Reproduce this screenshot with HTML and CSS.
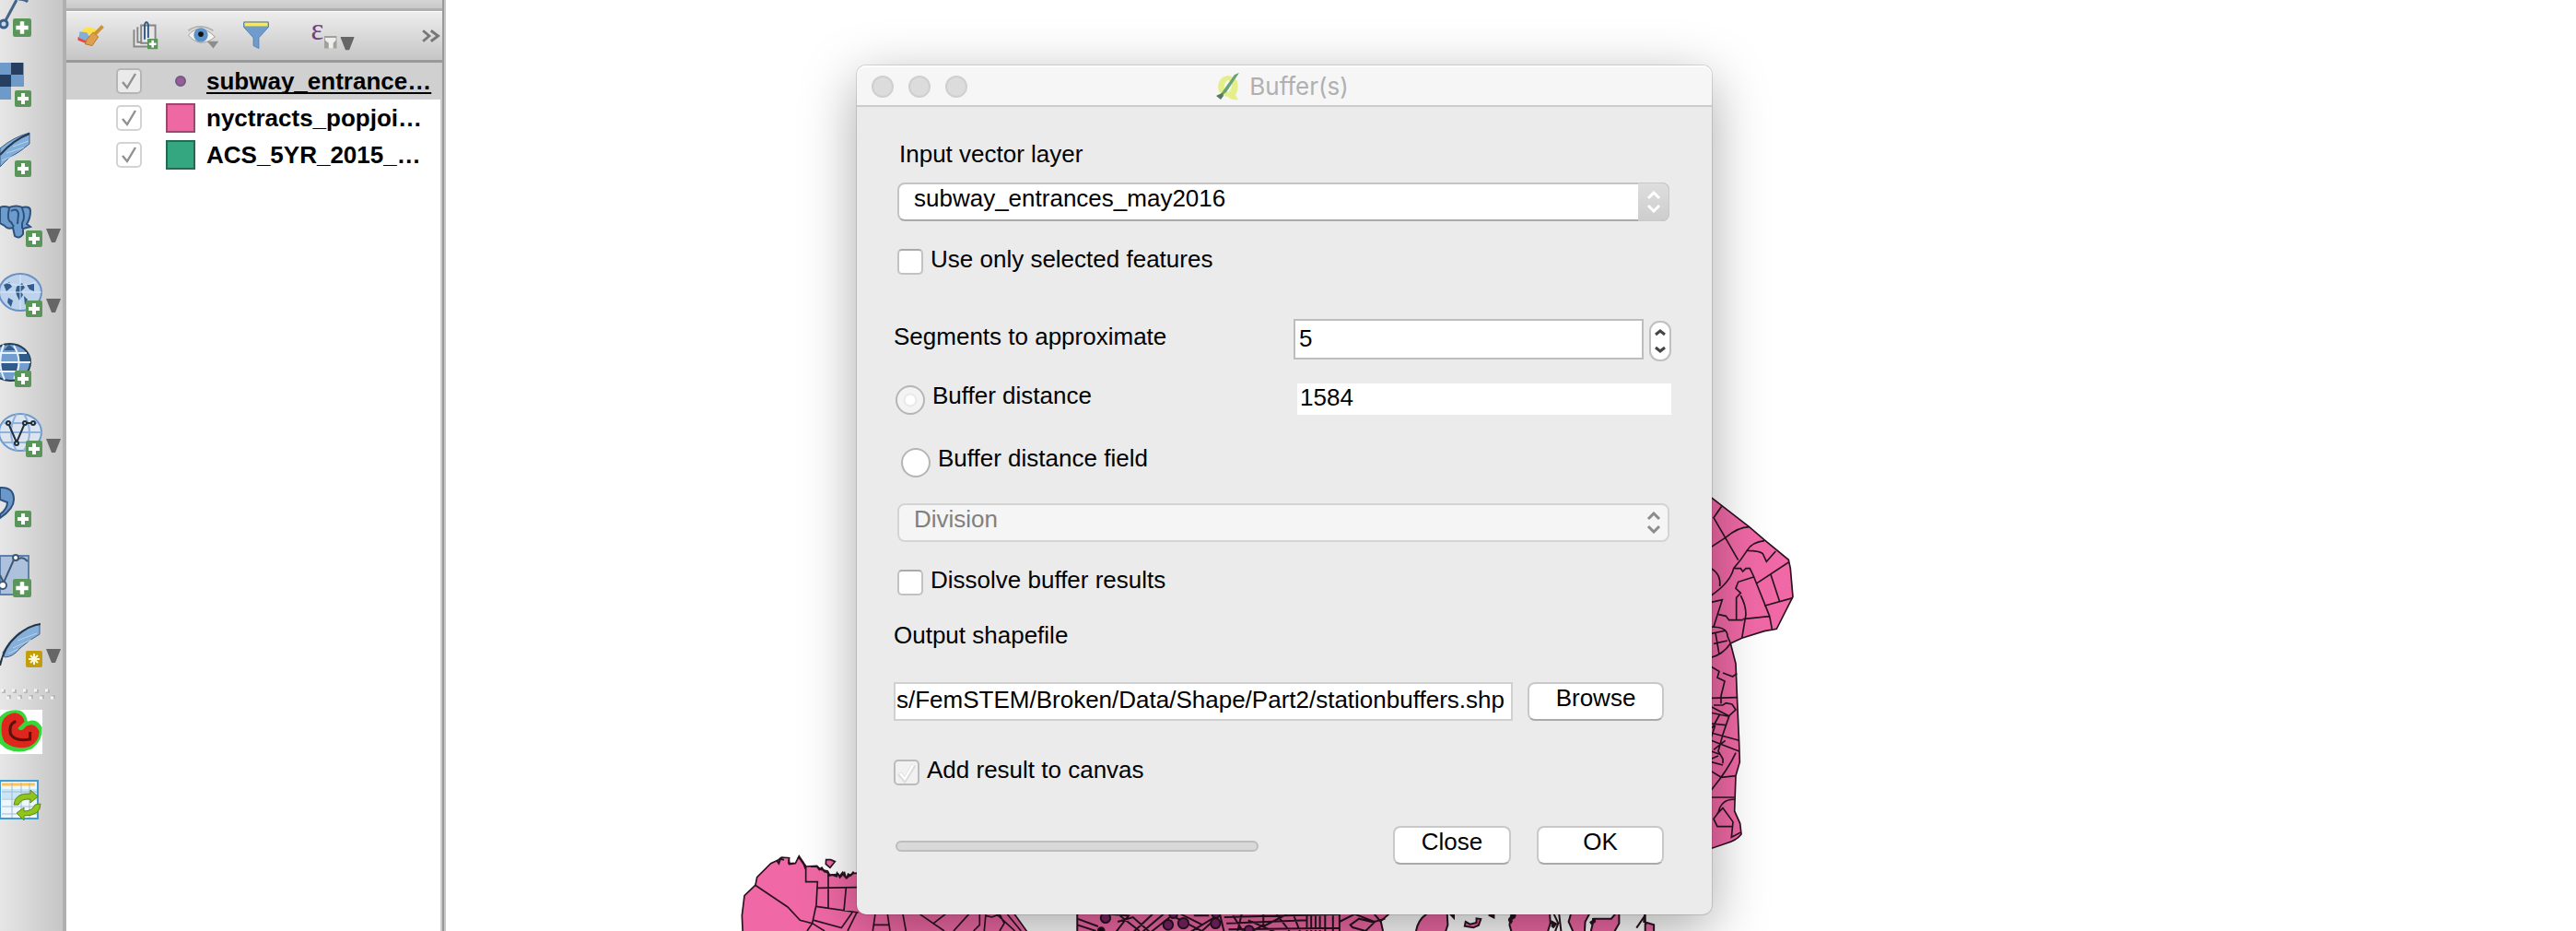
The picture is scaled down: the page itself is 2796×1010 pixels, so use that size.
FILE: index.html
```html
<!DOCTYPE html>
<html lang="en">
<head>
<meta charset="utf-8">
<title>Buffer(s)</title>
<link rel="stylesheet" href="styles.css">
</head>
<body>
<svg class="defs" aria-hidden="true">
  <symbol id="plus" viewBox="0 0 18 18"><rect width="18" height="18" rx="2" fill="#5a9659"/><path d="M9 3v12M3 9h12" stroke="#fff" stroke-width="4"/></symbol>
  <symbol id="down" viewBox="0 0 16 15"><path d="M0 0h16L10 15H6z" fill="#666"/></symbol>
  <symbol id="updown" viewBox="0 0 16 24"><path d="M2 8l6-6 6 6M2 16l6 6 6-6" fill="none" stroke="currentColor" stroke-width="3"/></symbol>
</svg>
<div class="app">
  <nav class="tools" aria-label="Manage layers">
    <button class="tool first" aria-label="Add vector layer"><svg viewBox="0 0 68 52"><path d="M4 26L18 0M20 -1Q27 -1 30 2" fill="none" stroke="#456488" stroke-width="3"/><circle cx="4" cy="26" r="4" fill="#cdd8e6" stroke="#3b5f8a" stroke-width="3"/><use href="#plus" x="14" y="20" width="20" height="20"/></svg></button>
    <button class="tool" aria-label="Add raster layer"><svg viewBox="0 52 68 76"><path d="M0 68h26v26H12v14H0z" fill="#6e9aca"/><path d="M12 68h13v13H12zM0 81h12v13H0z" fill="#263f60"/><use href="#plus" x="16" y="98" width="18" height="18"/></svg></button>
    <button class="tool" aria-label="Add delimited layer"><svg viewBox="0 128 68 76"><path d="M0 161Q14 149 32 144V156Q22 165 10 171L0 181z" fill="#82aedb" stroke="#405f82" stroke-width="1"/><path d="M0 168Q14 152 32 145" fill="none" stroke="#263b53" stroke-width="2"/><path d="M7 166L26 160M2 174L18 168M14 159L31 153" stroke="#b8d2ed"/><use href="#plus" x="16" y="174" width="18" height="18"/></svg></button>
    <button class="tool" aria-label="Add PostGIS layer"><svg viewBox="0 204 68 76"><path d="M0 225Q4 223 10 225Q18 222 24 225Q33 223 33 229Q33 237 29 243L33 246L25 248V254Q21 260 16 256L14 247Q8 249 5 245L0 242z" fill="#6c9bcd" stroke="#2d527b" stroke-width="2"/><path d="M10 226Q7 239 12 241L15 246M24 226Q28 236 24 242V248M12 229Q19 225 20 232L19 243" fill="none" stroke="#2d527b" stroke-width="2"/><use href="#plus" x="28" y="250" width="18" height="18"/><use href="#down" x="50" y="248" width="16" height="15"/></svg></button>
    <button class="tool" aria-label="Add SpatiaLite layer"><svg viewBox="0 280 68 76"><ellipse cx="22" cy="317" rx="23" ry="20" fill="#bdd2ec" stroke="#6791c4" stroke-width="2"/><path d="M4 309l6-3 3 5-6 5zM18 311l6-4 3 5-4 4 2 4-4 6-3-6-1-4zM29 309l8-1v8l-5-2zM9 323l5 3-2 7-4-5zM26 321l4 4-3 6z" fill="#315e8d"/><path d="M0 317h45M22 298v38M5 306q17 7 34 0" fill="none" stroke="#dce8f5" stroke-width="1"/><use href="#plus" x="28" y="326" width="18" height="18"/><use href="#down" x="50" y="324" width="16" height="15"/></svg></button>
    <button class="tool" aria-label="Add WMS layer"><svg viewBox="0 356 68 76"><ellipse cx="11" cy="393" rx="22" ry="20" fill="#739fd0" stroke="#253e57" stroke-width="2"/><path d="M4 380L10 374L17 380zM20 384h11l2 8H20zM0 394h20v9H0z" fill="#315b88"/><path d="M0 383h29M0 393h33M0 403h26M4 374Q-4 393 5 412M15 375Q26 393 15 411" fill="none" stroke="#e8f0f9" stroke-width="2"/><use href="#plus" x="16" y="402" width="18" height="18"/></svg></button>
    <button class="tool" aria-label="Add WFS layer"><svg viewBox="0 432 68 76"><ellipse cx="22" cy="469" rx="23" ry="20" fill="#dce5ef" stroke="#6d9bd0" stroke-width="2"/><path d="M0 469h45M4 459h36M4 480h28M18 449Q6 469 18 489M26 449Q38 469 26 489" fill="none" stroke="#8eb2dc" stroke-width="2"/><path d="M9 459L18 480L27 459H36" fill="none" stroke="#202f3c" stroke-width="2"/><g fill="#dce5ef" stroke="#202f3c" stroke-width="2"><circle cx="9" cy="459" r="2"/><circle cx="18" cy="481" r="2"/><circle cx="27" cy="459" r="2"/><circle cx="36" cy="459" r="2"/></g><use href="#plus" x="28" y="478" width="18" height="18"/><use href="#down" x="50" y="476" width="16" height="15"/></svg></button>
    <button class="tool" aria-label="Add delimited text layer"><svg viewBox="0 508 68 76"><path d="M0 529Q15 528 15 542Q15 552 0 562V558Q8 552 8 545L0 542z" fill="#6b98cb" stroke="#2d527b" stroke-width="2"/><use href="#plus" x="16" y="554" width="18" height="18"/></svg></button>
    <button class="tool" aria-label="Add virtual layer"><svg viewBox="0 584 68 76"><path d="M0 603h31v42H0z" fill="#adc1dc" stroke="#5f80aa" stroke-width="2"/><path d="M0 624L4 632L16 605M18 608Q24 602 30 609" fill="none" stroke="#3d5875" stroke-width="2"/><g fill="#fff" stroke="#3d5875" stroke-width="2"><circle cx="3" cy="635" r="4"/><circle cx="17" cy="605" r="3"/></g><use href="#plus" x="14" y="628" width="20" height="20"/></svg></button>
    <button class="tool" aria-label="New layer"><svg viewBox="0 660 68 76"><path d="M3 708Q16 682 43 677V688Q32 694 22 703Q14 713 5 713z" fill="#86afd9" stroke="#405f82" stroke-width="1"/><path d="M0 722Q4 702 18 690T44 677" fill="none" stroke="#23364c" stroke-width="2"/><path d="M14 703L34 694M19 695L40 687M9 709L20 704" stroke="#b8d2ed"/><rect x="28" y="706" width="18" height="18" rx="2" fill="#c29e0c"/><path d="M37 709v12M31 715h12M33 711l8 8M41 711l-8 8" stroke="#fff8d8" stroke-width="2"/><use href="#down" x="50" y="704" width="16" height="15"/></svg></button>
    <svg class="grip" viewBox="0 736 68 24" aria-hidden="true"><g stroke="#b9b9b9" stroke-width="4" stroke-dasharray="4 8"><path d="M2 750H60M8 756H62"/></g><g stroke="#f5f5f5" stroke-width="3" stroke-dasharray="3 9"><path d="M1 749H58M7 757H61"/></g></svg>
    <button class="tool low" aria-label="Buffer"><svg viewBox="0 760 68 72"><path d="M0 770h46v48H0z" fill="#fff"/><g transform="translate(0 560) scale(.3333)"><path d="M0 652Q25 625 65 632Q85 640 90 668Q120 655 137 688Q140 730 105 757Q60 776 20 757L0 740z" fill="#37d63b"/><path d="M5 680Q10 645 50 640Q75 645 80 668L58 690Q68 706 85 684Q112 668 128 700Q128 735 95 750Q50 762 15 735Q2 715 5 680z" fill="#dd271d"/><path d="M52 668Q28 675 34 708Q48 735 98 726V702" fill="none" stroke="#5d100c" stroke-width="9"/></g></svg></button>
    <button class="tool" aria-label="Refresh table"><svg viewBox="0 832 68 76"><path d="M0 847h41v41H0z" fill="#eef7fd" stroke="#439bcd" stroke-width="2"/><path d="M2 856h38v10H2z" fill="#c9e5f6"/><path d="M2 851h36" stroke="#ffc24d" stroke-width="3"/><path d="M2 859h38M2 867h38M2 875h38M2 883h38M13 849v38M23 849v38M32 849v38" stroke="#9dbbd3"/><path d="M15 873Q16 860 33 861V857L41 864L33 871V867Q23 866 20 873zM44 872Q44 885 26 885V890L18 882L26 876V880Q35 880 38 873z" fill="#91c51c" stroke="#568b10" stroke-width="1"/></svg></button>
  </nav>

  <aside class="panel" aria-label="Layers">
    <div class="panel-head"></div>
    <div class="panel-bar">
      <button class="icon w56" aria-label="Style"><svg viewBox="72 12 56 54"><path d="M84 40l8 2 8 3-2 4-14-5z" fill="#ef4438"/><path d="M89 31l8-2 8 3-4 6-12-3z" fill="#ffe14b"/><path d="M86 34l8 1 4 6-4 4-9-4z" fill="#82aed8"/><path d="M94 43l7-8 6 5-7 10-8-2z" fill="#dda04f" stroke="#b77627" stroke-width="1"/><path d="M103 37L112 28" stroke="#d19332" stroke-width="4"/></svg></button>
      <button class="icon w60" aria-label="Add group"><svg viewBox="128 12 60 54"><g fill="#e6e6e6" stroke="#858585" stroke-width="2"><path d="M145 32v19h17M149 29v17h17"/><path d="M153 27h16v20h-16z"/></g><path d="M157 43V26q2-5 4 0v15" fill="none" stroke="#33598a" stroke-width="2"/><use href="#plus" x="160" y="42" width="12" height="12"/></svg></button>
      <button class="icon w60" aria-label="Visibility"><svg viewBox="188 12 60 54"><path d="M204 38Q217 23 234 40Q217 54 204 38z" fill="#f3f3f0" stroke="#9c9c98" stroke-width="1"/><path d="M204 33Q216 24 232 33" fill="none" stroke="#b5b0a8" stroke-width="2"/><circle cx="218" cy="38" r="8" fill="#5e93ca"/><circle cx="218" cy="37" r="3" fill="#111"/><path d="M225 45h13l-6 8z" fill="#8d8d8d"/></svg></button>
      <button class="icon w60" aria-label="Filter"><svg viewBox="248 12 60 54"><path d="M264 24h28v5l-11 12v12l-6-3v-9l-11-12z" fill="#709bcd" stroke="#527fac" stroke-width="1"/><path d="M265 26h26" stroke="#ffe84a" stroke-width="4"/><path d="M264 23h28" stroke="#a39a45"/></svg></button>
      <button class="icon w88" aria-label="Filter by expression"><svg viewBox="308 12 88 54"><text class="eps" x="337" y="43">ε</text><path d="M352 39h14v14h-14z" fill="#a0a09c"/><path d="M353 41h12v3l-3 3v6h-5v-6l-4-3z" fill="#eee"/><use href="#down" x="370" y="40" width="16" height="15"/></svg></button>
      <button class="icon more" aria-label="More"><svg viewBox="446 12 34 54"><path d="M459 33l7 6-7 6M468 33l8 6-8 6" fill="none" stroke="#777" stroke-width="3"/></svg></button>
    </div>
    <ul class="layers">
      <li class="layer current"><input class="box tick" type="checkbox" id="l1" checked><span class="swatch point"></span><label for="l1">subway_entrance…</label></li>
      <li class="layer"><input class="box tick" type="checkbox" id="l2" checked><span class="swatch pink"></span><label for="l2">nyctracts_popjoi…</label></li>
      <li class="layer"><input class="box tick" type="checkbox" id="l3" checked><span class="swatch green"></span><label for="l3">ACS_5YR_2015_…</label></li>
    </ul>
  </aside>

  <main class="canvas">
    <svg class="map" viewBox="484 0 2312 1010" preserveAspectRatio="xMinYMin slice" aria-label="Map of census tracts">
      <g transform="translate(1820 520) scale(.3333)" fill="none" stroke="#29131f" stroke-width="5">
        <path d="M100 52L116 62L236 155L285 197L364 262L370 290L378 382L325 487L285 494L212 517L175 534L192 600L196 700L203 860L205 920L192 965L188 1080L206 1120L210 1155Q195 1175 160 1185L116 1200H90z" fill="#f069a6"/>
        <path d="M146 88L120 125L158 190L200 263M112 220L158 190Q200 155 236 155M285 200Q245 205 230 230Q210 262 185 290Q175 335 112 378M230 232Q270 232 280 242L292 268L322 234M185 290H208L215 300L225 290H238L250 315L302 445L310 487M250 318L200 334L192 355L208 370L194 385V455M261 338L364 270M306 310L334 395M285 412L378 386M208 378Q225 410 225 440L212 517M215 455L300 446M112 290Q145 310 140 348M112 400L148 392L120 480M136 440L160 445L170 458H215M112 480Q165 480 165 510L175 534M112 502L160 492M120 535L165 525M112 580Q150 570 175 534M126 500L138 570"/>
        <path d="M112 610L138 625L132 645L156 657L144 705V730M150 630L182 642L196 632M112 712L196 710M120 735H150L160 728L180 732L192 750L170 770L112 740M112 760L170 772L150 830L135 885L150 910V925M112 795L160 800M112 825L203 850M112 850L203 885M112 885L140 895M112 920L150 930M192 890Q170 940 112 1012M112 950L145 970L192 965M112 1035H188M188 1042Q145 1040 135 1085L120 1105L132 1130H180M130 1090L150 1070L183 1115L178 1165L210 1148M140 765L115 810M125 800L112 840M158 850L120 880M135 900L112 910"/>
      </g>
      <g transform="translate(780 910) scale(.3333)" fill="none" stroke="#29131f" stroke-width="5">
        <path d="M80 340L76 250L84 185L120 150L125 125L170 80L192 70L205 60L230 62L228 80L250 80L262 56L278 80L285 90L320 88L332 100L355 105L362 118L390 115L395 126L410 110L415 128L440 112L500 110V240H960L1010 310V340z" fill="#f069a6"/>
        <path d="M190 72l6 8 5-15 12 3M228 68l3 14 14-2M258 60l8 6 12 18 5 14M300 90l20 0 8 10 8-6 8 12 12 4 2 10 12-3 14 5 2-10 8 10 10-12 6 12 8 5 4-12 8 4 10-12" stroke-width="6"/>
        <path d="M350 68h15l14 6-16 20-14-12z" fill="#f069a6"/>
        <path d="M118 150L225 222L265 265L305 275L345 300M284 90V140H322L318 215L305 275L288 300M357 115V225M322 160L450 158M415 160L408 235M318 220L455 240M310 265L400 290L435 240M450 240L420 300M510 245L502 300M550 245L558 300M600 245L610 300M505 280H555M655 245L735 300M700 275L745 240M850 245V280L830 300M815 245L765 300M870 245L865 300M870 250L890 255L915 245L930 275L915 300M905 245L965 300M940 245L985 300"/>
      </g>
      <g class="mesh" transform="translate(1140 940) scale(.472 .3333)" fill="none" stroke="#29131f">
        <path d="M62 140H790L760 178L768 230H62zM862 140H912L914 190L905 230H840Q840 180 865 155zM1062 140H1148L1150 185L1140 230H1064L1056 190zM1200 140H1245L1230 180L1228 230H1208L1192 180zM1250 170H1290L1308 140V185L1290 230H1240zM1368 140L1365 180L1388 190V230H1368zM955 180l10 8 15-5v-14l10 2-5 20-12 8-20-5zM1008 158h12v8zM920 155h8v12z" fill="#f069a6"/>
        <path d="M62 170L110 195M62 190L105 210M90 150L180 160L150 215M155 180L190 165L230 215M190 215L235 155M210 215L260 155M230 215L275 165M160 160L205 210M280 160L355 215M300 155L350 190M320 215L390 155M345 215L380 170M330 160L365 160M390 155L400 215M400 165L665 155M405 185L590 175M410 205L665 200M420 160L445 215M440 155L430 215M455 175L520 215M490 155V190L460 215M520 155L550 210M545 155L490 195M560 160L575 215M590 155V215M600 155V215M610 155V215M620 155V215M632 155V215M650 160V215M665 155V215M665 180L700 155L745 180L770 170M690 190L710 170L745 182L725 210L695 198zM745 155L760 180M1158 155L1168 185L1160 215M1170 155L1175 215M1348 200L1365 165L1370 190"/>
        <path d="M1062 155q10 5 0 12t0 15M1150 180l10 8-6 10M1250 168v10l-8 8" class="heavy"/>
        <g fill="#7b2467"><ellipse cx="127" cy="167" rx="11" ry="16"/><ellipse cx="271" cy="190" rx="11" ry="16"/><ellipse cx="306" cy="185" rx="12" ry="17"/><ellipse cx="380" cy="185" rx="11" ry="16"/><ellipse cx="381" cy="155" rx="9" ry="12"/><ellipse cx="283" cy="156" rx="9" ry="12"/><ellipse cx="457" cy="206" rx="10" ry="13"/></g>
        <ellipse cx="117" cy="208" rx="7" ry="9" fill="#1a0814"/>
      </g>
    </svg>

    <section class="dialog" role="dialog" aria-labelledby="title">
      <header class="titlebar">
        <div class="lights"><button aria-label="Close window"></button><button aria-label="Minimise"></button><button aria-label="Zoom"></button></div>
        <svg class="logo" viewBox="0 0 26 32" aria-hidden="true"><path d="M12 4Q2 6 2 17Q3 26 13 27Q16 31 24 30L21 25Q25 19 23 10Q19 4 12 4zM13 9Q17 9 17 15Q16 21 12 22Q8 20 9 14Q10 10 13 9z" fill="#e4ef8c" fill-rule="evenodd"/><path d="M25 1L11 22L6 26L5 24L20 3z" fill="#69a374"/><path d="M0 26l4-2 3-1 1 3-3 4z" fill="#56785d"/></svg>
        <h1 id="title">Buffer(s)</h1>
      </header>
      <form class="form">
        <label class="caption" for="layer">Input vector layer</label>
        <div class="combo">
          <select id="layer"><option>subway_entrances_may2016</option></select>
          <span class="cap"><svg><use href="#updown"/></svg></span>
        </div>
        <div class="check after-combo"><input class="box" type="checkbox" id="sel"><label for="sel">Use only selected features</label></div>
        <div class="segments">
          <label for="seg">Segments to approximate</label>
          <input class="field" type="number" id="seg" value="5">
          <button type="button" class="stepper" aria-label="Step value"><svg viewBox="0 0 12 26"><path d="M1 6l5-4 5 4M1 20l5 4 5-4" fill="none" stroke="#444" stroke-width="3"/></svg></button>
        </div>
        <div class="distance">
          <input class="radio faded" type="radio" name="mode" id="dist" checked><label for="dist">Buffer distance</label>
          <input class="field plain" type="text" value="1584" aria-label="Distance">
        </div>
        <div class="by-field"><input class="radio" type="radio" name="mode" id="fld"><label for="fld">Buffer distance field</label></div>
        <div class="combo off">
          <select disabled aria-label="Distance field"><option>Division</option></select>
          <span class="cap"><svg><use href="#updown"/></svg></span>
        </div>
        <div class="check after-combo"><input class="box" type="checkbox" id="dis"><label for="dis">Dissolve buffer results</label></div>
        <label class="output" for="out">Output shapefile</label>
        <div class="file"><input class="field path" type="text" id="out" value="s/FemSTEM/Broken/Data/Shape/Part2/stationbuffers.shp"><button type="button" class="push">Browse</button></div>
        <div class="check add"><input class="box faint" type="checkbox" id="add" checked><label for="add">Add result to canvas</label></div>
        <footer class="actions"><div class="bar" role="progressbar" aria-label="Progress"></div><button type="button" class="push close">Close</button><button type="button" class="push ok">OK</button></footer>
      </form>
    </section>
  </main>
</div>
</body>
</html>
```
FILE: styles.css
```css
* { box-sizing: border-box; }

body {
  margin: 0;
  background: #fff;
  color: #000;
  font: 26px/30px "Liberation Sans", Arial, sans-serif;
}

button, input, select { font: inherit; color: inherit; margin: 0; }
button { padding: 0; border: 0; background: none; }
.defs { position: absolute; width: 0; height: 0; }

.app { display: flex; height: 100vh; overflow: hidden; }

/* Left tool column */
.tools {
  display: flex;
  flex-direction: column;
  flex: none;
  width: 72px;
  border-right: 4px solid #b0b0b0;
  background: linear-gradient(90deg, #e6e6e6, #c6c6c6);
}
.tool { flex: none; height: 76px; }
.tool.first { height: 52px; }
.tool.low { height: 72px; }
.tool svg, .icon svg { display: block; width: 100%; height: 100%; }
.grip { flex: none; height: 24px; }

/* Layers panel */
.panel {
  display: flex;
  flex-direction: column;
  flex: none;
  width: 410px;
  margin-right: 2px;
  border-right: 2px solid #999;
  box-shadow: 2px 0 #c8c8c8;
}
.panel-head { height: 12px; background: linear-gradient(#d4d4d4, #c9c9c9); border-bottom: 3px solid #b0b0b0; }
.panel-bar {
  display: flex;
  height: 56px;
  border-top: 1px solid #fff;
  border-bottom: 3px solid #999;
  background: linear-gradient(#ededed, #c6c6c6);
}
.icon { flex: none; width: 60px; }
.icon.w56 { width: 56px; }
.icon.w88 { width: 88px; }
.icon.more { width: 34px; margin-left: auto; }
.eps { font: 34px "Liberation Serif", serif; fill: #713f7c; }

.layers {
  flex: 1;
  margin: 0;
  padding: 0;
  border-right: 2px solid #ccc;
  list-style: none;
  font-weight: bold;
}
.layer { display: flex; align-items: center; height: 40px; padding-left: 54px; }
.layer label { white-space: nowrap; }
.current { background: #d0d0d0; }
.current label { text-decoration: underline; text-decoration-thickness: 2px; text-underline-offset: 3px; text-decoration-skip-ink: none; }
.swatch { flex: none; width: 32px; height: 32px; margin: 0 12px 0 26px; border: 2px solid; }
.pink { background: #ee68a3; border-color: #9c476d; }
.green { background: #35a780; border-color: #226b53; }
.point { width: 12px; height: 12px; margin: 0 22px 0 36px; border-color: #6f5a83; border-radius: 50%; background: #9b5b9b; }

/* Tick boxes and radios */
.box, .radio {
  appearance: none;
  flex: none;
  width: 28px;
  height: 28px;
  border: 2px solid #c2c2c2;
  border-top-color: #aaa;
  border-radius: 5px;
  background: #fff;
}
.radio { width: 32px; height: 32px; border-color: #b5b5b5; border-radius: 50%; }
.faded { background: radial-gradient(circle, #fff 5px, #e5e5e5 6px, #f3f3f3 8px); }
.tick {
  border-color: #d3d3d3;
  background: center no-repeat url("data:image/svg+xml,%3Csvg xmlns='http://www.w3.org/2000/svg' width='24' height='24'%3E%3Cpath d='M5 13l5 6 9-15' fill='none' stroke='%23909090' stroke-width='2.4'/%3E%3C/svg%3E") #fff;
}
.current .tick { border-color: #b5b5b5; background-color: #eaeaea; }
.faint {
  border-color: #bbb;
  background: center no-repeat url("data:image/svg+xml,%3Csvg xmlns='http://www.w3.org/2000/svg' width='24' height='24'%3E%3Cpath d='M4 13l6 7 10-16' fill='none' stroke='%23dcdcdc' stroke-width='5'/%3E%3Cpath d='M5 13l5 6 9-15' fill='none' stroke='%23fff' stroke-width='2.4'/%3E%3C/svg%3E") #f1f1f1;
}

/* Map canvas */
.canvas { position: relative; flex: 1; min-width: 0; overflow: hidden; }
.map { position: absolute; inset: 0; width: 100%; height: 100%; }
.mesh * { vector-effect: non-scaling-stroke; stroke-width: 2px; }
.mesh .heavy { stroke-width: 4px; }

/* Dialog window */
.dialog {
  position: absolute;
  left: 446px;
  top: 71px;
  width: 928px;
  border-radius: 10px;
  background: #ebebeb;
  box-shadow: 0 0 0 1px rgba(0, 0, 0, .12), 0 16px 60px rgba(0, 0, 0, .34);
}
.titlebar {
  display: flex;
  align-items: center;
  justify-content: center;
  position: relative;
  height: 45px;
  gap: 10px;
  padding: 2px 4px 0 0;
  border-bottom: 2px solid #ccc;
  border-radius: 10px 10px 0 0;
  background: #f6f6f6;
  box-shadow: inset 0 2px #fdfdfd;
}
.titlebar h1 { margin: 0; color: #b0b0b0; font: 26px/30px Inter, sans-serif; }
.logo { width: 26px; height: 32px; }
.lights { position: absolute; left: 16px; top: 11px; display: flex; gap: 16px; }
.lights button { width: 24px; height: 24px; border: 2px solid #cfcfcf; border-radius: 50%; background: #dcdcdc; }

.form { display: flex; flex-direction: column; padding: 36px 44px 54px 40px; }
.caption { margin: 0 0 16px 6px; }

.combo { position: relative; margin: 0 2px 0 4px; }
.combo select {
  appearance: none;
  display: block;
  width: 100%;
  height: 42px;
  padding: 0 40px 8px 16px;
  border: 2px solid #c4c4c4;
  border-bottom-color: #aaa;
  border-radius: 8px;
  background: #fff;
  opacity: 1;
}
.cap {
  position: absolute;
  inset: 0 0 0 auto;
  display: flex;
  align-items: center;
  justify-content: center;
  width: 34px;
  border: 1px solid #c8c8c8;
  border-left: 0;
  border-radius: 0 8px 8px 0;
  background: linear-gradient(#dedede, #cdcdcd);
  color: #fff;
  pointer-events: none;
}
.cap svg { width: 16px; height: 24px; }
.combo.off { margin-top: 28px; }
.off select { border-color: #d4d4d4; background: #f5f5f5; color: #808080; }
.off .cap { border-color: transparent; background: none; color: #8c8c8c; }

.check { display: flex; gap: 8px; height: 32px; padding-left: 4px; }
.check .box, .radio { align-self: flex-end; }
.after-combo { margin-top: 26px; }

.field { min-width: 0; padding: 0 4px; border: 2px solid #bdbdbd; border-radius: 0; background: #fff; appearance: textfield; }
.field::-webkit-inner-spin-button { appearance: none; }

.segments { display: flex; height: 46px; margin: 48px 0 22px; }
.segments label { flex: 1; padding-top: 4px; }
.segments .field { width: 380px; height: 44px; padding-bottom: 2px; }
.stepper {
  display: flex;
  align-items: center;
  justify-content: center;
  align-self: flex-end;
  width: 24px;
  height: 44px;
  margin-left: 6px;
  border: 2px solid #c0c0c0;
  border-radius: 11px;
  background: #fff;
}
.stepper svg { width: 12px; height: 26px; }

.distance, .by-field { display: flex; gap: 8px; height: 36px; padding-left: 2px; }
.by-field { margin-top: 32px; padding-left: 8px; }
.plain { align-self: flex-end; width: 406px; height: 34px; margin-left: auto; padding: 0 3px 4px; border: 0; }

.output { margin: 28px 0 36px; }
.file { display: flex; gap: 16px; padding-right: 8px; }
.path { flex: 1; height: 42px; padding: 0 0 4px 1px; border-color: #d0d0d0; }
.push {
  width: 148px;
  height: 42px;
  padding-bottom: 8px;
  border: 2px solid #c8c8c8;
  border-bottom-color: #aaa;
  border-radius: 8px;
  background: #fff;
}
.add { margin-top: 38px; padding-left: 0; }
.actions { display: flex; align-items: center; margin-top: 44px; padding: 0 8px 0 2px; }
.bar { width: 394px; height: 12px; margin: 2px auto 0 0; border: 2px solid #bdbdbd; border-radius: 6px; background: #d9d9d9; }
.close { width: 128px; margin-right: 28px; }
.ok { width: 138px; }
```
